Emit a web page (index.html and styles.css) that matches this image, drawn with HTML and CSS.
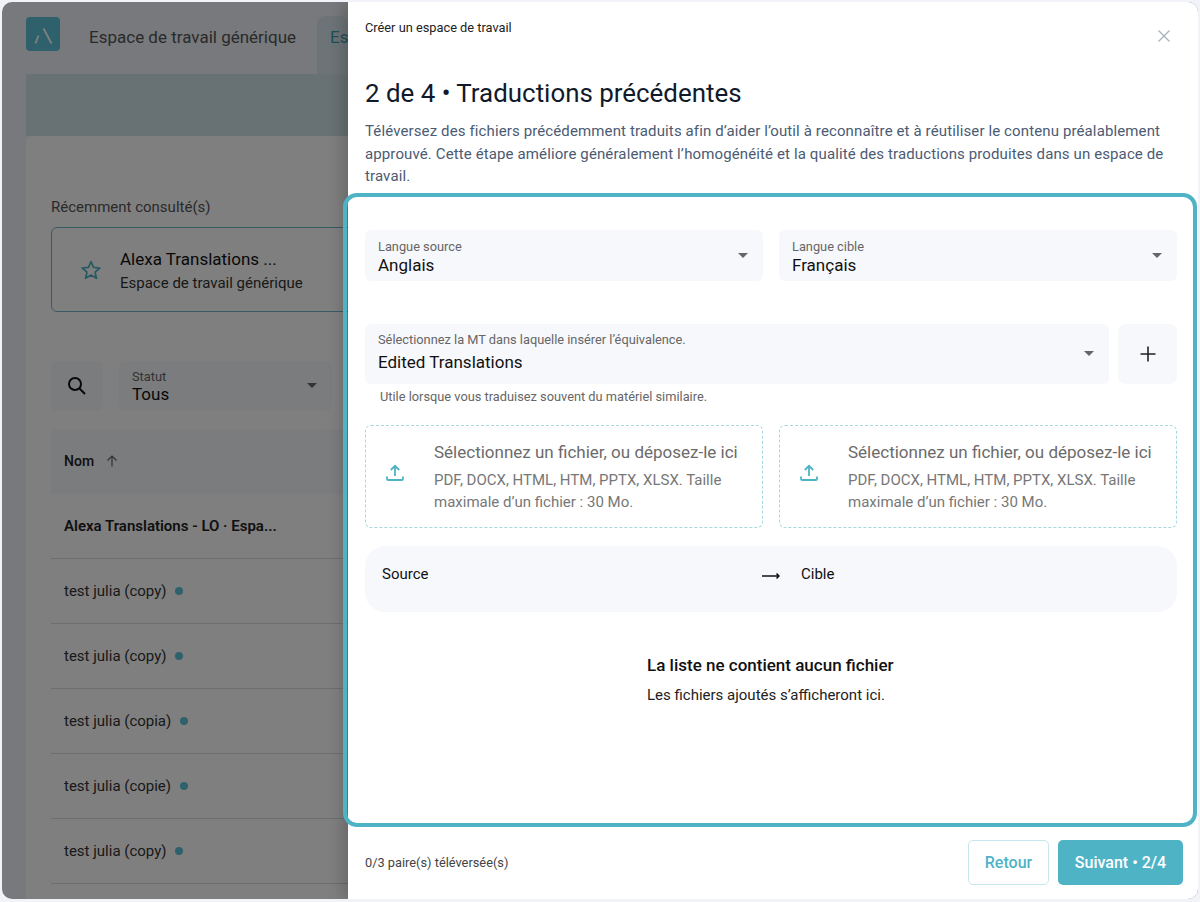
FILE: index.html
```html
<!DOCTYPE html>
<html lang="fr">
<head>
    <meta charset="UTF-8">
    <meta name="viewport" content="width=device-width, initial-scale=1.0">
    <title>Créer un espace de travail</title>
    <link rel="stylesheet" href="styles.css">
</head>
<body>
<div class="window">
    <div class="app">
        <header class="topbar">
            <div class="logo">
                <svg viewBox="0 0 34 34" width="34" height="34"><path d="M17.500 11.500 L25.500 26.500" stroke="#fff" stroke-width="1.800" fill="none"/><path d="M12.500 18.500 L9.500 26.500" stroke="#fff" stroke-width="1.800" fill="none"/></svg>
            </div>
            <span class="tab">Espace de travail générique</span>
            <span class="tab tab-active">Es</span>
        </header>
        <div class="band"></div>
        <main class="panel">
            <p class="recent-label">Récemment consulté(s)</p>
            <div class="recent-card">
                <svg class="star" viewBox="0 0 24 24" width="24" height="24"><path d="M12 3.600l2.500 5.800 6.300.6-4.800 4.100 1.500 6.200-5.500-3.300-5.500 3.300 1.500-6.200-4.800-4.100 6.300-.6z" fill="none" stroke="#4fb3c6" stroke-width="1.700" stroke-linejoin="round"/></svg>
                <div>
                    <div class="recent-title">Alexa Translations ...</div>
                    <div class="recent-sub">Espace de travail générique</div>
                </div>
            </div>
            <div class="toolbar">
                <div class="search-btn">
                    <svg viewBox="0 0 24 24" width="24" height="24"><circle cx="10" cy="10" r="6" fill="none" stroke="#111" stroke-width="2"/><path d="M14.500 14.500L20 20" stroke="#111" stroke-width="2" fill="none"/></svg>
                </div>
                <div class="status-select">
                    <div class="field-label">Statut</div>
                    <div class="field-value">Tous</div>
                    <span class="caret"></span>
                </div>
            </div>
            <div class="table-head">
                <span>Nom</span>
                <svg viewBox="0 0 16 16" width="16" height="16"><path d="M8 13.500V3M3.500 7.500L8 3l4.500 4.500" fill="none" stroke="#666" stroke-width="1.200"/></svg>
            </div>
            <div class="row row-bold">Alexa Translations - LO · Espa...</div>
            <div class="row">test julia (copy) <i class="dot"></i></div>
            <div class="row">test julia (copy) <i class="dot"></i></div>
            <div class="row">test julia (copia) <i class="dot"></i></div>
            <div class="row">test julia (copie) <i class="dot"></i></div>
            <div class="row">test julia (copy) <i class="dot"></i></div>
        </main>
    </div>

    <div class="backdrop"></div>

    <aside class="drawer">
        <div class="drawer-top">
            <span class="drawer-kicker">Créer un espace de travail</span>
            <svg class="close" viewBox="0 0 14 14" width="14" height="14"><path d="M1.500 1.500l11 11M12.500 1.500l-11 11" stroke="#a9b4bf" stroke-width="1.400" fill="none"/></svg>
        </div>
        <h1 class="drawer-title">2 de 4 • Traductions précédentes</h1>
        <p class="drawer-desc">Téléversez des fichiers précédemment traduits afin d’aider l’outil à reconnaître et à réutiliser le contenu préalablement approuvé. Cette étape améliore généralement l’homogénéité et la qualité des traductions produites dans un espace de travail.</p>

        <div class="form">
            <div class="two-cols">
                <div class="select">
                    <div class="field-label">Langue source</div>
                    <div class="field-value">Anglais</div>
                    <span class="caret"></span>
                </div>
                <div class="select">
                    <div class="field-label">Langue cible</div>
                    <div class="field-value">Français</div>
                    <span class="caret"></span>
                </div>
            </div>

            <div class="tm-row">
                <div class="select select-tall">
                    <div class="field-label">Sélectionnez la MT dans laquelle insérer l’équivalence.</div>
                    <div class="field-value">Edited Translations</div>
                    <span class="caret"></span>
                </div>
                <div class="add-btn">
                    <svg viewBox="0 0 16 16" width="16" height="16"><path d="M8 .5v15M.5 8h15" stroke="#222" stroke-width="1.600" fill="none"/></svg>
                </div>
            </div>
            <p class="hint">Utile lorsque vous traduisez souvent du matériel similaire.</p>

            <div class="two-cols uploads">
                <div class="upload">
                    <svg class="upload-icon" viewBox="0 0 18 18" width="18" height="18"><path d="M9 12V2M4.800 6L9 1.800 13.200 6M1 12.500v2.200c0 .8.500 1.300 1.300 1.300h13.400c.8 0 1.300-.5 1.300-1.300v-2.200" fill="none" stroke="#4fb3c6" stroke-width="1.800"/></svg>
                    <div>
                        <div class="upload-title">Sélectionnez un fichier, ou déposez-le ici</div>
                        <div class="upload-text">PDF, DOCX, HTML, HTM, PPTX, XLSX. Taille maximale d’un fichier : 30 Mo.</div>
                    </div>
                </div>
                <div class="upload">
                    <svg class="upload-icon" viewBox="0 0 18 18" width="18" height="18"><path d="M9 12V2M4.800 6L9 1.800 13.200 6M1 12.500v2.200c0 .8.500 1.300 1.300 1.300h13.400c.8 0 1.300-.5 1.300-1.300v-2.200" fill="none" stroke="#4fb3c6" stroke-width="1.800"/></svg>
                    <div>
                        <div class="upload-title">Sélectionnez un fichier, ou déposez-le ici</div>
                        <div class="upload-text">PDF, DOCX, HTML, HTM, PPTX, XLSX. Taille maximale d’un fichier : 30 Mo.</div>
                    </div>
                </div>
            </div>

            <div class="pairs-head">
                <span class="pairs-source">Source</span>
                <svg viewBox="0 0 18 8" width="18" height="8"><path d="M0 4h16.500M14.500 1.500L17 4l-2.500 2.500" fill="none" stroke="#111" stroke-width="1.500"/></svg>
                <span class="pairs-target">Cible</span>
            </div>

            <div class="empty">
                <div class="empty-title">La liste ne contient aucun fichier</div>
                <div class="empty-text">Les fichiers ajoutés s’afficheront ici.</div>
            </div>
        </div>

        <footer class="drawer-foot">
            <span class="count">0/3 paire(s) téléversée(s)</span>
            <button class="btn btn-back">Retour</button>
            <button class="btn btn-next">Suivant • 2/4</button>
        </footer>
    </aside>

    <div class="highlight"></div>
</div>
</body>
</html>
```
FILE: styles.css
```css
* {
    box-sizing: border-box;
}
html, body {
    margin: 0;
    height: 100%;
    overflow: hidden;
}
body {
    background: #f2f3f9;
    padding: 2px 2px 3px;
    font-family: Roboto, sans-serif;
    color: #111;
}
.window {
    position: relative;
    height: 897px;
    border-radius: 10px;
    overflow: hidden;
    background: #eef3f9;
}

/* page behind the drawer, cut off where the drawer starts */
.app {
    width: 346px;
    height: 100%;
    padding-left: 24px;
    overflow: hidden;
}
.topbar {
    display: flex;
    align-items: flex-start;
    height: 72px;
    padding-top: 15px;
}
.logo {
    width: 34px;
    height: 34px;
    border-radius: 4px;
    background: #5cc3d6;
    flex: none;
}
.tab {
    font-size: 17px;
    line-height: 40px;
    color: #555;
    margin-left: 29px;
    white-space: nowrap;
}
.tab-active {
    flex: 1;
    margin-top: -1px;
    margin-left: 21px;
    height: 58px;
    padding: 1px 0 1px 13px;
    background: #dbe8ee;
    border-radius: 8px 8px 0 0;
    color: #3f9fb2;
}
.band {
    height: 62px;
    background: #d0e2e8;
}
.panel {
    background: #fff;
    width: 800px;
    height: 800px;
    padding: 61px 25px 0;
    border-radius: 6px 0 0 0;
}
.recent-label {
    margin: 0 0 10px;
    font-size: 15px;
    line-height: 20px;
    color: #555;
}
.recent-card {
    display: flex;
    align-items: center;
    gap: 17px;
    width: 400px;
    height: 85px;
    padding: 2px 0 0 27px;
    border: 1px solid #6fb9c8;
    border-radius: 6px;
}
.star {
    margin-top: -2px;
}
.recent-title {
    font-size: 17px;
    line-height: 24px;
    color: #111;
}
.recent-sub {
    margin-top: 1px;
    font-size: 15px;
    line-height: 22px;
    color: #333;
}
.toolbar {
    display: flex;
    gap: 16px;
    margin-top: 49px;
}
.search-btn {
    width: 52px;
    height: 50px;
    border-radius: 6px;
    background: #f7f8fc;
    display: flex;
    align-items: center;
    justify-content: center;
}
.status-select {
    position: relative;
    width: 213px;
    height: 50px;
    padding: 9px 13px;
    border-radius: 6px;
    background: #f7f8fc;
}
.status-select .field-value {
    margin-top: -1px;
}
.table-head {
    display: flex;
    align-items: center;
    gap: 10px;
    height: 65px;
    margin-top: 18px;
    padding: 0 0 2px 13px;
    background: #f7f8fc;
    font-size: 14px;
    font-weight: 500;
    color: #222;
}
.row {
    display: flex;
    align-items: center;
    gap: 9px;
    height: 65px;
    padding-left: 13px;
    border-bottom: 1px solid #ddd;
    font-size: 15px;
    color: #333;
}
.row-bold {
    font-weight: 600;
    color: #222;
}
.dot {
    width: 8px;
    height: 8px;
    border-radius: 50%;
    background: #5cc3d6;
}

.backdrop {
    position: absolute;
    inset: 0;
    background: rgba(0, 0, 0, .5);
}

/* drawer */
.drawer {
    position: absolute;
    top: 0;
    right: 0;
    bottom: 0;
    width: 850px;
    display: flex;
    flex-direction: column;
    background: #fff;
    padding: 0 21px 0 17px;
    box-shadow: -6px 0 14px rgba(0, 0, 0, .18);
}
.drawer-top {
    display: flex;
    justify-content: space-between;
    height: 62px;
    padding-top: 18px;
}
.drawer-kicker {
    font-size: 12.800px;
    line-height: 16px;
    color: #222;
}
.close {
    margin-top: 9px;
    margin-right: 6px;
}
.drawer-title {
    margin: 14px 0 0;
    font-size: 25.900px;
    line-height: 30px;
    font-weight: 400;
    color: #111a2b;
}
.drawer-desc {
    margin: 12px 0 0;
    font-size: 15px;
    line-height: 22.500px;
    color: #4b5b73;
    letter-spacing: .12px;
}
.form {
    flex: 1;
    padding-top: 42.500px;
}
.two-cols {
    display: grid;
    grid-template-columns: 1fr 1fr;
    gap: 16px;
}
.select {
    position: relative;
    height: 51px;
    padding: 10px 13px;
    border-radius: 6px;
    background: #f7f8fc;
}
.select-tall {
    flex: 1;
    height: 60px;
    padding-top: 9px;
}
.field-label {
    font-size: 12.800px;
    line-height: 14px;
    color: #666;
}
.field-value {
    font-size: 17px;
    line-height: 22px;
    color: #111;
}
.select-tall .field-value {
    margin-top: 4px;
}
.caret {
    position: absolute;
    top: 50%;
    right: 15px;
    margin-top: -3px;
    width: 0;
    height: 0;
    border-left: 5px solid transparent;
    border-right: 5px solid transparent;
    border-top: 5px solid #666;
}
.tm-row {
    display: flex;
    gap: 9px;
    margin-top: 43px;
}
.add-btn {
    width: 59px;
    height: 60px;
    border-radius: 8px;
    background: #f7f8fc;
    display: flex;
    align-items: center;
    justify-content: center;
}
.hint {
    margin: 5px 0 0 15px;
    font-size: 12.800px;
    line-height: 16px;
    color: #666;
}
.uploads {
    margin-top: 20px;
}
.upload {
    display: flex;
    align-items: center;
    height: 103px;
    padding: 0 20px;
    border: 1px dashed #a5d7e1;
    border-radius: 6px;
}
.upload-icon {
    flex: none;
    margin-right: 30px;
    margin-top: -8px;
}
.upload-title {
    font-size: 17px;
    line-height: 24px;
    color: #6b6b6b;
    white-space: nowrap;
}
.upload-text {
    margin-top: 5px;
    font-size: 15px;
    line-height: 22.500px;
    color: #777;
}
.pairs-head {
    display: flex;
    align-items: flex-start;
    height: 66px;
    margin-top: 18px;
    padding: 18px 17px 0;
    border-radius: 20px;
    background: #f7f8fc;
    font-size: 15px;
    line-height: 20px;
    color: #111;
}
.pairs-source {
    width: 380px;
}
.pairs-head svg {
    margin-top: 8px;
}
.pairs-target {
    margin-left: 21px;
}
.empty {
    margin: 43px 0 0 282px;
}
.empty-title {
    font-size: 17px;
    font-weight: 500;
    line-height: 20px;
    color: #111;
}
.empty-text {
    margin-top: 10px;
    font-size: 15px;
    line-height: 20px;
    color: #222;
}
.drawer-foot {
    display: flex;
    align-items: center;
    gap: 9px;
    height: 72px;
    margin-right: -6px;
    padding-bottom: 1px;
}
.count {
    flex: 1;
    font-size: 12.800px;
    color: #444;
}
.btn {
    height: 45px;
    border-radius: 5px;
    font-family: inherit;
    font-size: 16px;
    font-weight: 500;
}
.btn-back {
    width: 81px;
    background: #fff;
    border: 1px solid #c5e6ec;
    color: #4fb3c6;
}
.btn-next {
    width: 125px;
    background: #4fb3c6;
    border: 0;
    color: #fff;
}

/* guide frame drawn on top of the form */
.highlight {
    position: absolute;
    left: 341px;
    top: 191px;
    width: 854px;
    height: 634px;
    border: 4px solid #4fb3c6;
    border-radius: 14px;
}
```
